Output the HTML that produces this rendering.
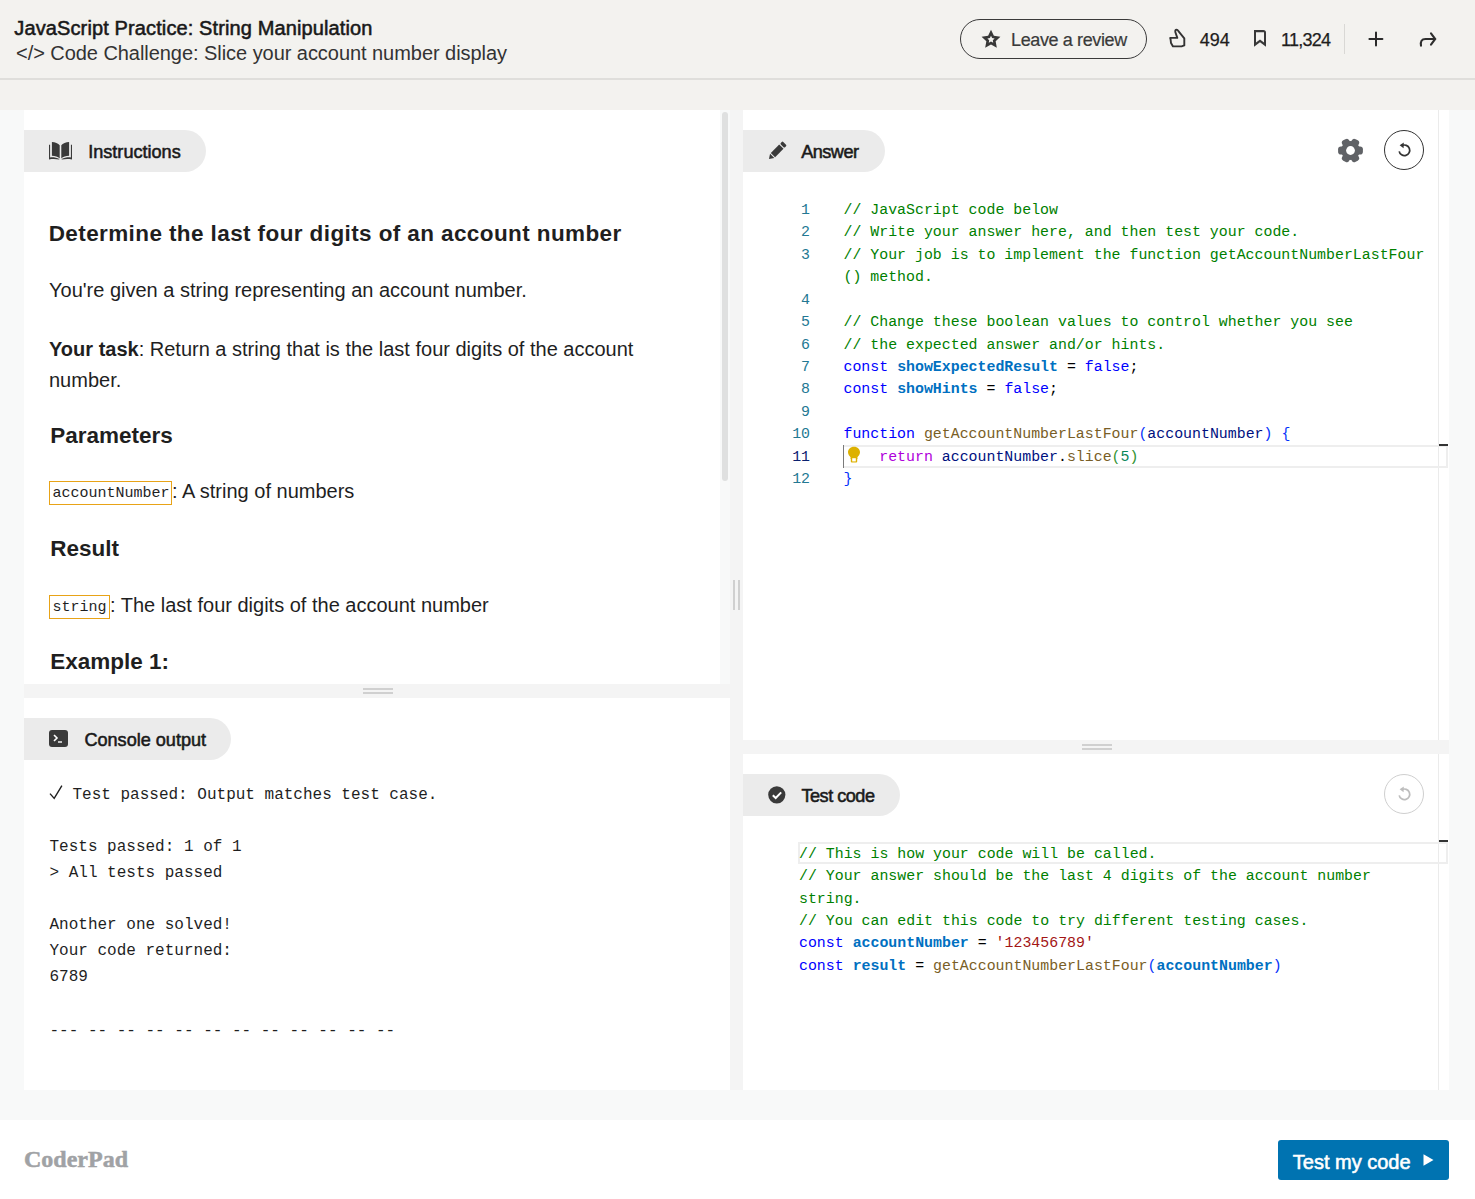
<!DOCTYPE html><html><head><meta charset="utf-8"><style>html,body{margin:0;padding:0;width:1475px;height:1199px;overflow:hidden;position:relative;background:#fff}</style></head><body>
<div style="position:absolute;left:0px;top:0px;width:1475px;height:78px;background:#f3f2ef"></div>
<div style="position:absolute;left:0px;top:78px;width:1475px;height:2px;background:#dfdedb"></div>
<div style="position:absolute;left:0px;top:80px;width:1475px;height:30px;background:#f3f2ef"></div>
<div style="position:absolute;left:0px;top:110px;width:1475px;height:1010px;background:#f8f9f9"></div>
<div style="position:absolute;left:0px;top:1120px;width:1475px;height:79px;background:#ffffff"></div>
<div style="position:absolute;left:24px;top:110px;width:696px;height:574px;background:#fff"></div>
<div style="position:absolute;left:720px;top:110px;width:10px;height:574px;background:#f8f9f9"></div>
<div style="position:absolute;left:722px;top:112px;width:6px;height:369px;background:#dfe0e0;border-radius:3px"></div>
<div style="position:absolute;left:24px;top:684px;width:706px;height:14px;background:#f4f4f4"></div>
<div style="position:absolute;left:363px;top:688px;width:30px;height:2px;background:#d0d0d0"></div>
<div style="position:absolute;left:363px;top:692px;width:30px;height:2px;background:#d0d0d0"></div>
<div style="position:absolute;left:24px;top:698px;width:706px;height:392px;background:#fff"></div>
<div style="position:absolute;left:730px;top:110px;width:13px;height:980px;background:#f4f4f4"></div>
<div style="position:absolute;left:733px;top:580px;width:2px;height:30px;background:#d0d0d0"></div>
<div style="position:absolute;left:738px;top:580px;width:2px;height:30px;background:#d0d0d0"></div>
<div style="position:absolute;left:743px;top:110px;width:706px;height:630px;background:#fff"></div>
<div style="position:absolute;left:743px;top:740px;width:706px;height:14px;background:#f4f4f4"></div>
<div style="position:absolute;left:1082px;top:744px;width:30px;height:2px;background:#d0d0d0"></div>
<div style="position:absolute;left:1082px;top:748px;width:30px;height:2px;background:#d0d0d0"></div>
<div style="position:absolute;left:743px;top:754px;width:706px;height:336px;background:#fff"></div>
<div style="position:absolute;left:1438px;top:110px;width:1px;height:630px;background:#ebebeb"></div>
<div style="position:absolute;left:1438px;top:754px;width:1px;height:336px;background:#ebebeb"></div>
<div style="position:absolute;left:14.3px;top:17.80px;font-family:'Liberation Sans', sans-serif;font-size:20px;line-height:1;font-weight:normal;letter-spacing:0.12px;color:#191919;white-space:pre;-webkit-text-stroke:0.55px #191919">JavaScript Practice: String Manipulation</div>
<div style="position:absolute;left:16px;top:42.80px;font-family:'Liberation Sans', sans-serif;font-size:20px;line-height:1;font-weight:normal;letter-spacing:-0.05px;color:#333333;white-space:pre;">&lt;/&gt; Code Challenge: Slice your account number display</div>
<div style="position:absolute;left:960px;top:19px;width:185px;height:38px;border:1px solid #3a3a3a;border-radius:20px"></div>
<div style="position:absolute;left:1011px;top:31.00px;font-family:'Liberation Sans', sans-serif;font-size:18px;line-height:1;font-weight:normal;letter-spacing:-0.38px;color:#3a3a3a;white-space:pre;-webkit-text-stroke:0.2px #3a3a3a">Leave a review</div>
<div style="position:absolute;left:1199.7px;top:30.70px;font-family:'Liberation Sans', sans-serif;font-size:18px;line-height:1;font-weight:normal;letter-spacing:0px;color:#1e1e1e;white-space:pre;-webkit-text-stroke:0.25px #1e1e1e">494</div>
<div style="position:absolute;left:1281px;top:30.70px;font-family:'Liberation Sans', sans-serif;font-size:18px;line-height:1;font-weight:normal;letter-spacing:-0.75px;color:#1e1e1e;white-space:pre;-webkit-text-stroke:0.25px #1e1e1e">11,324</div>
<div style="position:absolute;left:1344px;top:24px;width:1px;height:30px;background:#d9d8d5"></div>
<svg style="position:absolute;left:978px;top:26px" width="26" height="24" viewBox="0 0 26 24"><path fill-rule="evenodd" fill="#383838" d="M13.00,3.80 L15.88,9.74 L22.42,10.64 L17.66,15.21 L18.82,21.71 L13.00,18.60 L7.18,21.71 L8.34,15.21 L3.58,10.64 L10.12,9.74 Z M13.00,9.80 L14.12,12.06 L16.61,12.43 L14.81,14.19 L15.23,16.67 L13.00,15.50 L10.77,16.67 L11.19,14.19 L9.39,12.43 L11.88,12.06 Z"/></svg>
<svg style="position:absolute;left:1164px;top:24px" width="28" height="28" viewBox="0 0 28 28"><path d="M6.2 13.9 L13.3 13.9 L11.3 8 Q11 5.7 12.6 5.6 Q13.6 5.6 14.4 7.2 L20.3 14.4 L20.3 21.4 L17.6 22.4 L9 22.4 L7 19 L6.6 15.5 Z" fill="none" stroke="#333" stroke-width="1.9" stroke-linejoin="round"/></svg>
<svg style="position:absolute;left:1248px;top:26px" width="24" height="24" viewBox="0 0 24 24"><path fill-rule="evenodd" fill="#383838" d="M6 4 H15.3 Q18 4 18 6.8 V20.8 L12 16.3 L6 20.8 Z M8 6.2 V16.6 L12 13.4 L16 16.6 V6.2 Z"/></svg>
<svg style="position:absolute;left:1364px;top:28px" width="24" height="24" viewBox="0 0 24 24"><path d="M12 4.4 V17.4 M5.4 11 H18.4" stroke="#2a2a2a" stroke-width="2" stroke-linecap="round"/></svg>
<svg style="position:absolute;left:1412px;top:26px" width="30" height="26" viewBox="0 0 30 26"><path d="M9 19.6 C8.3 15.5 9.6 13 13.5 13 L22.5 13 M19 7.4 L23.2 13 L19 18.6" fill="none" stroke="#2e2e2e" stroke-width="2.1" stroke-linejoin="miter" stroke-linecap="round"/></svg>
<div style="position:absolute;left:24px;top:130px;width:182px;height:42px;background:#ebebeb;border-radius:0 21.0px 21.0px 0"></div>
<div style="position:absolute;left:743px;top:130px;width:142px;height:42px;background:#ebebeb;border-radius:0 21.0px 21.0px 0"></div>
<div style="position:absolute;left:24px;top:718px;width:207px;height:42px;background:#ebebeb;border-radius:0 21.0px 21.0px 0"></div>
<div style="position:absolute;left:743px;top:774px;width:157px;height:42px;background:#ebebeb;border-radius:0 21.0px 21.0px 0"></div>
<div style="position:absolute;left:88.2px;top:143.12px;font-family:'Liberation Sans', sans-serif;font-size:18.1px;line-height:1;font-weight:normal;letter-spacing:0px;color:#1a1a1a;white-space:pre;-webkit-text-stroke:0.55px #1a1a1a">Instructions</div>
<div style="position:absolute;left:801.2px;top:143.12px;font-family:'Liberation Sans', sans-serif;font-size:18.1px;line-height:1;font-weight:normal;letter-spacing:-0.5px;color:#1a1a1a;white-space:pre;-webkit-text-stroke:0.55px #1a1a1a">Answer</div>
<div style="position:absolute;left:84.4px;top:730.91px;font-family:'Liberation Sans', sans-serif;font-size:18.1px;line-height:1;font-weight:normal;letter-spacing:0px;color:#1a1a1a;white-space:pre;-webkit-text-stroke:0.55px #1a1a1a">Console output</div>
<div style="position:absolute;left:801.5px;top:787.01px;font-family:'Liberation Sans', sans-serif;font-size:18.1px;line-height:1;font-weight:normal;letter-spacing:-0.5px;color:#1a1a1a;white-space:pre;-webkit-text-stroke:0.55px #1a1a1a">Test code</div>
<svg style="position:absolute;left:44px;top:136px" width="34" height="28" viewBox="0 0 34 28"><g fill="#3a3a3a"><path d="M7.9 6 C11 6 14.3 7.3 15.7 9.3 L15.7 22.4 C14 20.6 11 19.7 7.9 19.7 Z"/><path d="M25.1 6 C22 6 18.7 7.3 17.3 9.3 L17.3 22.4 C19 20.6 22 19.7 25.1 19.7 Z"/><path d="M5 8.8 L6.1 8.8 L6.1 21.4 C9.5 21.1 13 21.8 15.3 23 L15.3 23.6 C12 23 8.5 22.9 5 23.5 Z"/><path d="M28 8.8 L26.9 8.8 L26.9 21.4 C23.5 21.1 20 21.8 17.7 23 L17.7 23.6 C21 23 24.5 22.9 28 23.5 Z"/></g></svg>
<svg style="position:absolute;left:767px;top:141px" width="20" height="20" viewBox="0 0 20 20"><g transform="rotate(45 10 10) translate(10 10) scale(1.08) translate(-10 -10)"><rect x="7.2" y="0" width="5.6" height="3.2" rx="1" fill="#3a3a3a"/><rect x="7.2" y="4.3" width="5.6" height="11" fill="#3a3a3a"/><path d="M7.2 16.3 L12.8 16.3 L10 20.5 Z" fill="#3a3a3a"/></g></svg>
<div style="position:absolute;left:49px;top:730px;width:19px;height:17px;background:#3a3a3a;border-radius:3px"></div>
<svg style="position:absolute;left:49px;top:730px" width="19" height="17" viewBox="0 0 19 17"><path d="M5 5 L8 8 L5 11" fill="none" stroke="#fff" stroke-width="1.6"/><path d="M9 12 H13" stroke="#fff" stroke-width="1.4"/></svg>
<svg style="position:absolute;left:767px;top:785px" width="20" height="20" viewBox="0 0 20 20"><circle cx="9.8" cy="9.8" r="8.6" fill="#3a3a3a"/><path d="M5.8 10.2 L8.7 13 L14.2 7.4" fill="none" stroke="#fff" stroke-width="2"/></svg>
<svg style="position:absolute;left:1337px;top:137px" width="27" height="27" viewBox="0 0 27 27"><g fill="#606266" transform="translate(13.5 13.5)"><circle r="9.4"/><rect x="-4" y="-12.4" width="8" height="24.8" rx="2.8" transform="rotate(30)"/><rect x="-4" y="-12.4" width="8" height="24.8" rx="2.8" transform="rotate(90)"/><rect x="-4" y="-12.4" width="8" height="24.8" rx="2.8" transform="rotate(150)"/></g><circle cx="13.5" cy="13.5" r="4.4" fill="#fff"/></svg>
<div style="position:absolute;left:1384px;top:130px;width:38px;height:38px;border:1.5px solid #333;border-radius:50%"></div>
<svg style="position:absolute;left:1397px;top:142px" width="15" height="16" viewBox="0 0 15 16"><path d="M2.2 9.3 A5.3 5.3 0 1 0 5 3.6" fill="none" stroke="#333" stroke-width="1.7"/><path d="M2.6 3.2 L6.8 0.6 L6.6 6.2 Z" fill="#333"/></svg>
<div style="position:absolute;left:1384px;top:774px;width:38px;height:38px;border:1.5px solid #cfcfcf;border-radius:50%"></div>
<svg style="position:absolute;left:1397px;top:786px" width="15" height="16" viewBox="0 0 15 16"><path d="M2.2 9.3 A5.3 5.3 0 1 0 5 3.6" fill="none" stroke="#bdbdbd" stroke-width="1.7"/><path d="M2.6 3.2 L6.8 0.6 L6.6 6.2 Z" fill="#bdbdbd"/></svg>
<div style="position:absolute;left:24px;top:1147.28px;font-family:'Liberation Serif', serif;font-size:24px;line-height:1;font-weight:bold;letter-spacing:0px;color:#a0a2a5;white-space:pre;-webkit-text-stroke:0.5px #a0a2a5">CoderPad</div>
<div style="position:absolute;left:1278px;top:1140px;width:171px;height:40px;background:#0073b1;border-radius:3px"></div>
<div style="position:absolute;left:1292.8px;top:1151.60px;font-family:'Liberation Sans', sans-serif;font-size:20px;line-height:1;font-weight:normal;letter-spacing:0px;color:#fff;white-space:pre;-webkit-text-stroke:0.55px #fff">Test my code</div>
<svg style="position:absolute;left:1422px;top:1153px" width="13" height="14" viewBox="0 0 13 14"><path d="M1.5 1.2 L11.5 7 L1.5 12.8 Z" fill="#fff"/></svg>
<div style="position:absolute;left:48.7px;top:223.38px;font-family:'Liberation Sans', sans-serif;font-size:22.5px;line-height:1;font-weight:bold;letter-spacing:0.4px;color:#1f1f1f;white-space:pre;">Determine the last four digits of an account number</div>
<div style="position:absolute;left:49px;top:279.90px;font-family:'Liberation Sans', sans-serif;font-size:20px;line-height:1;font-weight:normal;letter-spacing:0px;color:#1f1f1f;white-space:pre;">You're given a string representing an account number.</div>
<div style="position:absolute;left:49px;top:339.4px;font-family:'Liberation Sans', sans-serif;font-size:20px;line-height:1;color:#1f1f1f;white-space:pre"><b>Your task</b>: Return a string that is the last four digits of the account</div>
<div style="position:absolute;left:49px;top:369.50px;font-family:'Liberation Sans', sans-serif;font-size:20px;line-height:1;font-weight:normal;letter-spacing:0px;color:#1f1f1f;white-space:pre;">number.</div>
<div style="position:absolute;left:50.2px;top:424.77px;font-family:'Liberation Sans', sans-serif;font-size:22.5px;line-height:1;font-weight:bold;letter-spacing:0px;color:#1f1f1f;white-space:pre;">Parameters</div>
<div style="position:absolute;left:49px;top:481px;width:121px;height:22px;border:1px solid #e8a317"></div>
<div style="position:absolute;left:52.5px;top:486.21px;font-family:'Liberation Mono', monospace;font-size:15px;line-height:1;font-weight:normal;letter-spacing:0px;color:#1f1f1f;white-space:pre;">accountNumber</div>
<div style="position:absolute;left:172px;top:481.40px;font-family:'Liberation Sans', sans-serif;font-size:20px;line-height:1;font-weight:normal;letter-spacing:0px;color:#1f1f1f;white-space:pre;">: A string of numbers</div>
<div style="position:absolute;left:50.2px;top:537.98px;font-family:'Liberation Sans', sans-serif;font-size:22.5px;line-height:1;font-weight:bold;letter-spacing:0px;color:#1f1f1f;white-space:pre;">Result</div>
<div style="position:absolute;left:49px;top:595px;width:59px;height:22px;border:1px solid #e8a317"></div>
<div style="position:absolute;left:52.5px;top:600.31px;font-family:'Liberation Mono', monospace;font-size:15px;line-height:1;font-weight:normal;letter-spacing:0px;color:#1f1f1f;white-space:pre;">string</div>
<div style="position:absolute;left:110px;top:594.80px;font-family:'Liberation Sans', sans-serif;font-size:20px;line-height:1;font-weight:normal;letter-spacing:0px;color:#1f1f1f;white-space:pre;">: The last four digits of the account number</div>
<div style="position:absolute;left:50.2px;top:650.58px;font-family:'Liberation Sans', sans-serif;font-size:22.5px;line-height:1;font-weight:bold;letter-spacing:0px;color:#1f1f1f;white-space:pre;">Example 1:</div>
<svg style="position:absolute;left:49px;top:785px" width="16" height="16" viewBox="0 0 16 16"><path d="M1 8.6 L5.2 13.4 L12.9 0.6" fill="none" stroke="#1f1f1f" stroke-width="1.4"/></svg>
<div style="position:absolute;left:72.5px;top:786.74px;font-family:'Liberation Mono', monospace;font-size:16px;line-height:1;font-weight:normal;letter-spacing:0px;color:#1f1f1f;white-space:pre;">Test passed: Output matches test case.</div>
<div style="position:absolute;left:49.5px;top:838.74px;font-family:'Liberation Mono', monospace;font-size:16px;line-height:1;font-weight:normal;letter-spacing:0px;color:#1f1f1f;white-space:pre;">Tests passed: 1 of 1</div>
<div style="position:absolute;left:49.5px;top:864.74px;font-family:'Liberation Mono', monospace;font-size:16px;line-height:1;font-weight:normal;letter-spacing:0px;color:#1f1f1f;white-space:pre;">&gt; All tests passed</div>
<div style="position:absolute;left:49.5px;top:916.74px;font-family:'Liberation Mono', monospace;font-size:16px;line-height:1;font-weight:normal;letter-spacing:0px;color:#1f1f1f;white-space:pre;">Another one solved!</div>
<div style="position:absolute;left:49.5px;top:942.74px;font-family:'Liberation Mono', monospace;font-size:16px;line-height:1;font-weight:normal;letter-spacing:0px;color:#1f1f1f;white-space:pre;">Your code returned:</div>
<div style="position:absolute;left:49.5px;top:968.74px;font-family:'Liberation Mono', monospace;font-size:16px;line-height:1;font-weight:normal;letter-spacing:0px;color:#1f1f1f;white-space:pre;">6789</div>
<div style="position:absolute;left:49.5px;top:1022.74px;font-family:'Liberation Mono', monospace;font-size:16px;line-height:1;font-weight:normal;letter-spacing:0px;color:#1f1f1f;white-space:pre;">--- -- -- -- -- -- -- -- -- -- -- --</div>
<div style="position:absolute;left:843px;top:445.1px;width:603px;height:19px;border:2px solid #eeeeee;border-left:none"></div>
<div style="position:absolute;left:843px;top:445.1px;width:1.2px;height:23px;background:#7a7a7a"></div>
<div style="position:absolute;left:1439px;top:444px;width:9px;height:2px;background:#333"></div>
<div style="position:absolute;left:843.5px;top:198.88px;font-family:'Liberation Mono', monospace;font-size:14.9px;line-height:22.5px;height:22.5px;color:#000;white-space:pre"><span style="color:#008000">// JavaScript code below</span></div>
<div style="position:absolute;left:760px;width:50px;text-align:right;top:198.88px;font-family:'Liberation Mono', monospace;font-size:14.9px;line-height:22.5px;color:#237893;white-space:pre">1</div>
<div style="position:absolute;left:843.5px;top:221.33px;font-family:'Liberation Mono', monospace;font-size:14.9px;line-height:22.5px;height:22.5px;color:#000;white-space:pre"><span style="color:#008000">// Write your answer here, and then test your code.</span></div>
<div style="position:absolute;left:760px;width:50px;text-align:right;top:221.33px;font-family:'Liberation Mono', monospace;font-size:14.9px;line-height:22.5px;color:#237893;white-space:pre">2</div>
<div style="position:absolute;left:843.5px;top:243.78px;font-family:'Liberation Mono', monospace;font-size:14.9px;line-height:22.5px;height:22.5px;color:#000;white-space:pre"><span style="color:#008000">// Your job is to implement the function getAccountNumberLastFour</span></div>
<div style="position:absolute;left:760px;width:50px;text-align:right;top:243.78px;font-family:'Liberation Mono', monospace;font-size:14.9px;line-height:22.5px;color:#237893;white-space:pre">3</div>
<div style="position:absolute;left:843.5px;top:266.23px;font-family:'Liberation Mono', monospace;font-size:14.9px;line-height:22.5px;height:22.5px;color:#000;white-space:pre"><span style="color:#008000">() method.</span></div>
<div style="position:absolute;left:760px;width:50px;text-align:right;top:266.23px;font-family:'Liberation Mono', monospace;font-size:14.9px;line-height:22.5px;color:#237893;white-space:pre"></div>
<div style="position:absolute;left:843.5px;top:288.68px;font-family:'Liberation Mono', monospace;font-size:14.9px;line-height:22.5px;height:22.5px;color:#000;white-space:pre"></div>
<div style="position:absolute;left:760px;width:50px;text-align:right;top:288.68px;font-family:'Liberation Mono', monospace;font-size:14.9px;line-height:22.5px;color:#237893;white-space:pre">4</div>
<div style="position:absolute;left:843.5px;top:311.13px;font-family:'Liberation Mono', monospace;font-size:14.9px;line-height:22.5px;height:22.5px;color:#000;white-space:pre"><span style="color:#008000">// Change these boolean values to control whether you see</span></div>
<div style="position:absolute;left:760px;width:50px;text-align:right;top:311.13px;font-family:'Liberation Mono', monospace;font-size:14.9px;line-height:22.5px;color:#237893;white-space:pre">5</div>
<div style="position:absolute;left:843.5px;top:333.58px;font-family:'Liberation Mono', monospace;font-size:14.9px;line-height:22.5px;height:22.5px;color:#000;white-space:pre"><span style="color:#008000">// the expected answer and/or hints.</span></div>
<div style="position:absolute;left:760px;width:50px;text-align:right;top:333.58px;font-family:'Liberation Mono', monospace;font-size:14.9px;line-height:22.5px;color:#237893;white-space:pre">6</div>
<div style="position:absolute;left:843.5px;top:356.03px;font-family:'Liberation Mono', monospace;font-size:14.9px;line-height:22.5px;height:22.5px;color:#000;white-space:pre"><span style="color:#0000ff">const</span> <span style="color:#0070c1;font-weight:bold">showExpectedResult</span> = <span style="color:#0000ff">false</span>;</div>
<div style="position:absolute;left:760px;width:50px;text-align:right;top:356.03px;font-family:'Liberation Mono', monospace;font-size:14.9px;line-height:22.5px;color:#237893;white-space:pre">7</div>
<div style="position:absolute;left:843.5px;top:378.48px;font-family:'Liberation Mono', monospace;font-size:14.9px;line-height:22.5px;height:22.5px;color:#000;white-space:pre"><span style="color:#0000ff">const</span> <span style="color:#0070c1;font-weight:bold">showHints</span> = <span style="color:#0000ff">false</span>;</div>
<div style="position:absolute;left:760px;width:50px;text-align:right;top:378.48px;font-family:'Liberation Mono', monospace;font-size:14.9px;line-height:22.5px;color:#237893;white-space:pre">8</div>
<div style="position:absolute;left:843.5px;top:400.93px;font-family:'Liberation Mono', monospace;font-size:14.9px;line-height:22.5px;height:22.5px;color:#000;white-space:pre"></div>
<div style="position:absolute;left:760px;width:50px;text-align:right;top:400.93px;font-family:'Liberation Mono', monospace;font-size:14.9px;line-height:22.5px;color:#237893;white-space:pre">9</div>
<div style="position:absolute;left:843.5px;top:423.38px;font-family:'Liberation Mono', monospace;font-size:14.9px;line-height:22.5px;height:22.5px;color:#000;white-space:pre"><span style="color:#0000ff">function</span> <span style="color:#795e26">getAccountNumberLastFour</span><span style="color:#0431fa">(</span><span style="color:#001080">accountNumber</span><span style="color:#0431fa">)</span> <span style="color:#0431fa">{</span></div>
<div style="position:absolute;left:760px;width:50px;text-align:right;top:423.38px;font-family:'Liberation Mono', monospace;font-size:14.9px;line-height:22.5px;color:#237893;white-space:pre">10</div>
<div style="position:absolute;left:843.5px;top:445.83px;font-family:'Liberation Mono', monospace;font-size:14.9px;line-height:22.5px;height:22.5px;color:#000;white-space:pre">    <span style="color:#af00db">return</span> <span style="color:#001080">accountNumber</span>.<span style="color:#795e26">slice</span><span style="color:#319331">(</span><span style="color:#098658">5</span><span style="color:#319331">)</span></div>
<div style="position:absolute;left:760px;width:50px;text-align:right;top:445.83px;font-family:'Liberation Mono', monospace;font-size:14.9px;line-height:22.5px;color:#0b216f;white-space:pre">11</div>
<div style="position:absolute;left:843.5px;top:468.28px;font-family:'Liberation Mono', monospace;font-size:14.9px;line-height:22.5px;height:22.5px;color:#000;white-space:pre"><span style="color:#0431fa">}</span></div>
<div style="position:absolute;left:760px;width:50px;text-align:right;top:468.28px;font-family:'Liberation Mono', monospace;font-size:14.9px;line-height:22.5px;color:#237893;white-space:pre">12</div>
<svg style="position:absolute;left:847px;top:446px" width="14" height="17" viewBox="0 0 14 17"><path d="M7 0.8 C3.3 0.8 1 3.3 1 6.3 C1 8.6 2.6 10 3.6 11.3 L3.6 13 L10.4 13 L10.4 11.3 C11.4 10 13 8.6 13 6.3 C13 3.3 10.7 0.8 7 0.8 Z" fill="#ddb100"/><rect x="3.8" y="11" width="6.4" height="5.6" rx="1" fill="#ddb100"/><rect x="5.2" y="12.2" width="3.6" height="3.2" fill="#fff"/></svg>
<div style="position:absolute;left:798px;top:842.2px;width:646px;height:18px;border:2px solid #eeeeee"></div>
<div style="position:absolute;left:1439px;top:840px;width:9px;height:2px;background:#333"></div>
<div style="position:absolute;left:799px;top:842.78px;font-family:'Liberation Mono', monospace;font-size:14.9px;line-height:22.5px;height:22.5px;color:#000;white-space:pre"><span style="color:#008000">// This is how your code will be called.</span></div>
<div style="position:absolute;left:799px;top:865.18px;font-family:'Liberation Mono', monospace;font-size:14.9px;line-height:22.5px;height:22.5px;color:#000;white-space:pre"><span style="color:#008000">// Your answer should be the last 4 digits of the account number</span></div>
<div style="position:absolute;left:799px;top:887.58px;font-family:'Liberation Mono', monospace;font-size:14.9px;line-height:22.5px;height:22.5px;color:#000;white-space:pre"><span style="color:#008000">string.</span></div>
<div style="position:absolute;left:799px;top:909.98px;font-family:'Liberation Mono', monospace;font-size:14.9px;line-height:22.5px;height:22.5px;color:#000;white-space:pre"><span style="color:#008000">// You can edit this code to try different testing cases.</span></div>
<div style="position:absolute;left:799px;top:932.38px;font-family:'Liberation Mono', monospace;font-size:14.9px;line-height:22.5px;height:22.5px;color:#000;white-space:pre"><span style="color:#0000ff">const</span> <span style="color:#0070c1;font-weight:bold">accountNumber</span> = <span style="color:#a31515">'123456789'</span></div>
<div style="position:absolute;left:799px;top:954.78px;font-family:'Liberation Mono', monospace;font-size:14.9px;line-height:22.5px;height:22.5px;color:#000;white-space:pre"><span style="color:#0000ff">const</span> <span style="color:#0070c1;font-weight:bold">result</span> = <span style="color:#795e26">getAccountNumberLastFour</span><span style="color:#0431fa">(</span><span style="color:#0070c1;font-weight:bold">accountNumber</span><span style="color:#0431fa">)</span></div>
</body></html>
